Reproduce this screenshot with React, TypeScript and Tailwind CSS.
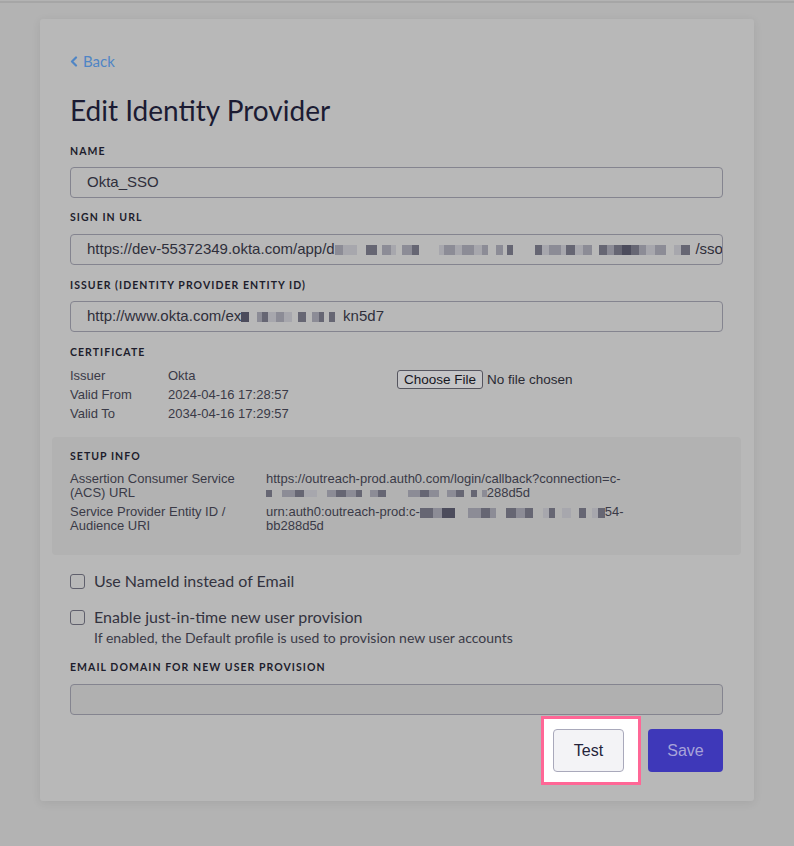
import React from "react";

type Blk = [number, string];

function Px({ blocks, h = 9, total }: { blocks: Blk[]; h?: number; total: number }) {
  const sum = blocks.reduce((a, b) => a + b[0], 0);
  const k = total / sum;
  return (
    <span className="inline-flex items-center align-middle">
      {blocks.map(([w, c], i) => (
        <span key={i} className="inline-block" style={{ width: w * k, height: h, background: c }} />
      ))}
    </span>
  );
}

const L = "#a7a7ad";
const M = "#8c8c96";
const D = "#666673";
const K = "#4c4c5c";
const B = "transparent";

const signBlocks: Blk[] = [
  [6, M], [10, L], [6, B], [8, D], [4, B], [6, M], [4, L], [4, B], [7, M], [5, D], [14, B],
  [4, L], [8, M], [5, L], [8, M], [6, L], [4, M], [6, B], [5, M], [3, B], [4, D], [16, B],
  [5, D], [5, L], [8, M], [4, L], [6, D], [6, L], [6, M], [5, B], [6, D], [5, M], [6, D], [6, K], [6, D],
  [5, M], [6, L], [8, M], [6, B], [5, L], [6, D], [4, B],
];

const issuerBlocks: Blk[] = [[6, K], [6, B], [4, M], [5, D], [6, L], [6, M], [6, L], [5, B], [6, D], [5, B], [5, M], [4, D], [4, B], [5, D], [6, B]];

const acsBlocks: Blk[] = [[4, D], [6, B], [8, M], [6, D], [8, L], [6, B], [6, M], [6, D], [6, M], [4, D], [5, B], [5, M], [5, D], [14, B], [7, M], [6, D], [6, M], [5, B], [6, M], [5, D], [4, B], [4, D], [3, B], [3, M]];

const urnBlocks: Blk[] = [[8, D], [6, M], [8, K], [8, B], [8, M], [6, D], [4, M], [6, B], [6, D], [6, M], [5, D], [6, B], [4, L], [4, D], [4, B], [6, L], [5, B], [4, D], [4, B], [4, L], [4, D]];

function Label({ children, className = "" }: { children: React.ReactNode; className?: string }) {
  return (
    <div
      className={`text-[10.5px] leading-[14px] font-bold uppercase tracking-[0.1em] text-[#1d1d2c] ${className}`}
      style={{ fontFamily: "Lato, 'Noto Sans', sans-serif" }}
    >
      {children}
    </div>
  );
}

function Field({ children, className = "", bg = "" }: { children?: React.ReactNode; className?: string; bg?: string }) {
  return (
    <div
      className={`h-[31px] w-full rounded-[4px] border border-[#84848f] flex items-center pl-[16px] overflow-hidden whitespace-nowrap text-[15px] text-[#2f2f3b] ${bg} ${className}`}
      style={{ fontFamily: "'Liberation Sans', Arial, sans-serif" }}
    >
      {children}
    </div>
  );
}

function Check({ children }: { children: React.ReactNode }) {
  return (
    <div className="flex items-center gap-[9px] h-[20px]">
      <span className="w-[15px] h-[15px] rounded-[3px] border border-[#5f5f6c] shrink-0" />
      <span className="text-[16px] text-[#33333f]">{children}</span>
    </div>
  );
}

export default function App() {
  const sans = { fontFamily: "'Liberation Sans', Arial, sans-serif" };
  return (
    <div className="min-h-[846px] bg-[#b3b3b3]" style={{ fontFamily: "Lato, 'Noto Sans', sans-serif" }}>
      <div className="h-[1px]" />
      <div className="h-[2px] bg-[#a6a6a6]" />
      <div className="ml-[40px] mt-[16px] w-[714px] bg-[#b8b8b8] rounded-[3px] shadow-[0_2px_10px_rgba(0,0,0,0.08)] pl-[30px] pr-[31px] pt-[32px] pb-[29px]">
        <div className="flex items-center gap-[5px] h-[20px] text-[15px] text-[#4f85c5]">
          <svg width="8" height="11" viewBox="0 0 8 11">
            <path d="M6 1.5 L2 5.5 L6 9.5" fill="none" stroke="#4f85c5" strokeWidth="2.2" strokeLinecap="round" strokeLinejoin="round" />
          </svg>
          <span>Back</span>
        </div>
        <h1 className="mt-[23px] h-[32px] leading-[32px] text-[28px] text-[#1b1b33]">Edit Identity Provider</h1>

        <Label className="mt-[18px]">Name</Label>
        <Field className="mt-[9px]">Okta_SSO</Field>

        <Label className="mt-[12px]">Sign in URL</Label>
        <Field className="mt-[10px]">
          <span>https://dev-55372349.okta.com/app/d</span>
          <Px blocks={signBlocks} total={361} h={10} />
          <span>/sso</span>
        </Field>

        <Label className="mt-[13px]">Issuer (Identity Provider Entity ID)</Label>
        <Field className="mt-[9px]">
          <span>http://www.okta.com/ex</span>
          <Px blocks={issuerBlocks} total={102} h={10} />
          <span>kn5d7</span>
        </Field>

        <Label className="mt-[13px]">Certificate</Label>
        <div className="mt-[7px] flex text-[13px] leading-[19px] text-[#3a3a47]" style={sans}>
          <div className="w-[327px] grid grid-cols-[98px_1fr]">
            <span>Issuer</span>
            <span>Okta</span>
            <span>Valid From</span>
            <span>2024-04-16 17:28:57</span>
            <span>Valid To</span>
            <span>2034-04-16 17:29:57</span>
          </div>
          <div className="flex items-start gap-[4px] pt-[4px]">
            <span className="h-[19px] px-[6px] leading-[17px] text-[13.5px] border border-[#55555f] rounded-[3px] bg-[#c4c4c6] text-[#16161e]">Choose File</span>
            <span className="leading-[19px] text-[13.5px] text-[#2a2a33]">No file chosen</span>
          </div>
        </div>

        <div className="mt-[14px] -mx-[18px] px-[18px] pt-[12px] pb-[22px] bg-[#b2b2b2] rounded-[4px]">
          <Label>Setup Info</Label>
          <div className="mt-[9px] grid grid-cols-[196px_1fr] gap-y-[5px] text-[13px] leading-[14px] text-[#3a3a47]" style={sans}>
            <span>
              Assertion Consumer Service
              <br />
              (ACS) URL
            </span>
            <span>
              https://outreach-prod.auth0.com/login/callback?connection=c-
              <br />
              <Px blocks={acsBlocks} total={221} h={7} />
              288d5d
            </span>
            <span>
              Service Provider Entity ID /
              <br />
              Audience URI
            </span>
            <span>
              urn:auth0:outreach-prod:c-
              <Px blocks={urnBlocks} total={185} h={10} />
              54-
              <br />
              bb288d5d
            </span>
          </div>
        </div>

        <div className="mt-[16px]">
          <Check>Use NameId instead of Email</Check>
        </div>
        <div className="mt-[16px]">
          <Check>Enable just-in-time new user provision</Check>
        </div>
        <div className="mt-[2px] pl-[24px] text-[14px] leading-[17px] text-[#3a3a47]">
          If enabled, the Default profile is used to provision new user accounts
        </div>

        <Label className="mt-[14px]">Email domain for new user provision</Label>
        <Field className="mt-[10px]" bg="bg-[#b0b0b0]" />

        <div className="mt-[14px] flex justify-end gap-[24px]">
          <div className="relative">
            <span className="absolute left-[-12px] right-[-17px] top-[-13px] bottom-[-13px] bg-white border-[3px] border-[#ff6796]" />
            <button
              className="relative h-[43px] w-[71px] rounded-[4px] border border-[#a9a9bb] bg-[#f3f3f6] text-[16px] text-[#24243a]"
              style={sans}
            >
              Test
            </button>
          </div>
          <button
            className="h-[43px] w-[75px] rounded-[4px] bg-[#3e38b9] text-[16px] text-[#a8a4d9]"
            style={sans}
          >
            Save
          </button>
        </div>
      </div>
    </div>
  );
}
